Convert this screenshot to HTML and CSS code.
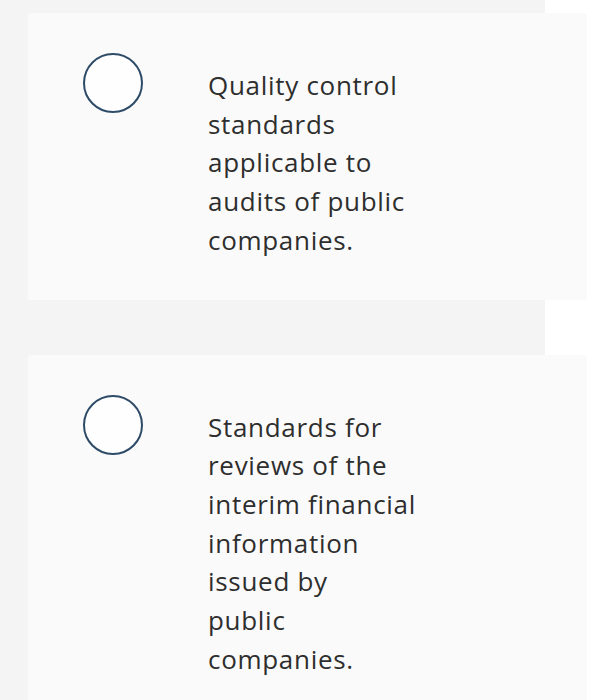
FILE: index.html
```html
<!DOCTYPE html>
<html lang="en">
<head>
<meta charset="utf-8">
<title>Options</title>
<link rel="stylesheet" href="styles.css">
</head>
<body>
<div class="page">
  <div class="option">
    <span class="radio"></span>
    <p class="label">Quality control standards applicable to audits of public companies.</p>
  </div>
  <div class="option">
    <span class="radio"></span>
    <p class="label">Standards for reviews of the interim financial information issued by<br>public companies.</p>
  </div>
</div>
</body>
</html>
```
FILE: styles.css
```css
html, body {
  margin: 0;
  padding: 0;
  background: #ffffff;
}
.page {
  width: 545px;
  min-height: 700px;
  background: #f4f4f4;
  padding: 13px 0 0 28px;
  box-sizing: border-box;
  display: flex;
  flex-direction: column;
  gap: 55px;
}
.option {
  width: 559px;
  flex: none;
  background: #fafafa;
  border-radius: 3px;
  box-sizing: border-box;
  padding: 40px 0 40px 55px;
  display: flex;
  align-items: flex-start;
}
.radio {
  width: 56px;
  height: 56px;
  flex: none;
  border: 2px solid #2d4a67;
  border-radius: 50%;
  background: #fefefe;
}
.label {
  margin: 13px 0 0 65px;
  width: 212px;
  font-family: "Open Sans", Lato, sans-serif;
  font-size: 26px;
  letter-spacing: 0.7px;
  line-height: 38.7px;
  color: #2e2e2e;
}
```
